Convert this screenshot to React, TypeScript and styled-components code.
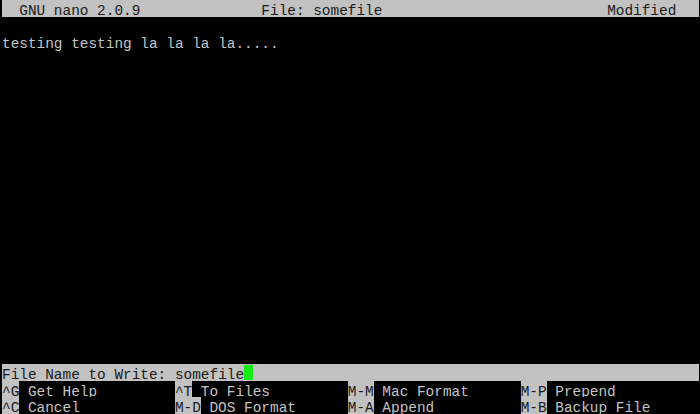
import React from "react";
import styled, { createGlobalStyle } from "styled-components";

const ROW = 16.56;

const Global = createGlobalStyle`
  html, body { margin: 0; padding: 0; background: #000; }
  body { width: 700px; height: 414px; overflow: hidden; }
`;

const Screen = styled.div`
  width: 700px;
  height: 414px;
  box-sizing: border-box;
  padding: 0 1px 0 2px;
  background: #000;
  display: flex;
  flex-direction: column;
  overflow: hidden;
  font-family: "Liberation Mono", "Courier New", monospace;
  font-size: 14.42px;
  color: #c4c4c4;
  white-space: pre;
`;

const Line = styled.div<{ $inverse?: boolean }>`
  height: ${ROW}px;
  line-height: ${ROW}px;
  box-sizing: border-box;
  padding-top: 3px;
  flex: none;
  background: ${(p) => (p.$inverse ? "#c2c2c2" : "transparent")};
  color: ${(p) => (p.$inverse ? "#1a1a1a" : "#c4c4c4")};
`;

const TitleBar = styled(Line)`
  display: grid;
  grid-template-columns: 30ch 40ch 1fr;
`;

const Title = styled.span`
  padding-left: 2ch;
`;

const Editor = styled.div`
  flex: 1;
  display: flex;
  flex-direction: column;
`;

const StatusLine = styled(Line)`
  display: flex;
  align-items: flex-start;
`;

const Cursor = styled.span`
  display: inline-block;
  width: 1ch;
  height: 15px;
  margin-top: -2px;
  background: #14ec14;
`;

const Shortcuts = styled.div`
  display: grid;
  grid-template-columns: repeat(4, 20ch);
  grid-auto-rows: ${ROW}px;
`;

const Shortcut = styled.div`
  display: flex;
  height: ${ROW}px;
  line-height: ${ROW}px;
`;

const Key = styled.span`
  background: #c2c2c2;
  color: #1a1a1a;
  box-sizing: border-box;
  padding-top: 3px;
`;

const Label = styled.span`
  flex: 1;
  padding-left: 1ch;
  padding-top: 3px;
  box-sizing: border-box;
  background: #000;
  color: #c4c4c4;
`;

const items: [string, string][] = [
  ["^G", "Get Help"],
  ["^T", "To Files"],
  ["M-M", "Mac Format"],
  ["M-P", "Prepend"],
  ["^C", "Cancel"],
  ["M-D", "DOS Format"],
  ["M-A", "Append"],
  ["M-B", "Backup File"],
];

export default function App() {
  return (
    <>
      <Global />
      <Screen>
        <TitleBar $inverse>
          <Title>GNU nano 2.0.9</Title>
          <span>File: somefile</span>
          <span>Modified</span>
        </TitleBar>
        <Editor>
          <Line />
          <Line>testing testing la la la la.....</Line>
        </Editor>
        <StatusLine $inverse>
          File Name to Write: somefile<Cursor />
        </StatusLine>
        <Shortcuts>
          {items.map(([k, l]) => (
            <Shortcut key={k}>
              <Key>{k}</Key>
              <Label>{l}</Label>
            </Shortcut>
          ))}
        </Shortcuts>
      </Screen>
    </>
  );
}
